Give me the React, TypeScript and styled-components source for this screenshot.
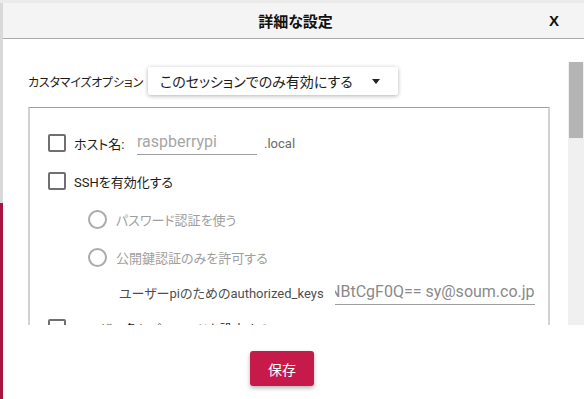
import styled, { createGlobalStyle } from "styled-components";

const GlobalStyle = createGlobalStyle`
  body {
    margin: 0;
    font-family: Roboto, "Noto Sans CJK JP", sans-serif;
    font-feature-settings: "palt";
  }
`;

const Page = styled.div`
  box-sizing: border-box;
  height: 399px;
  width: 584px;
  padding: 3px 0 0 3px;
  display: flex;
  overflow: hidden;
  background:
    linear-gradient(#ebebeb, #ebebeb) top / 100% 3px no-repeat,
    linear-gradient(to bottom, #d9d9d9 203px, #a8163f 203px);
`;

const Dialog = styled.div`
  flex: 1;
  display: flex;
  flex-direction: column;
  background: #fff;
  min-width: 0;
`;

const Header = styled.div`
  height: 35px;
  flex-shrink: 0;
  background: #f4f4f4;
  border-bottom: 1px solid #ababab;
  display: grid;
  grid-template-columns: 1fr auto 1fr;
  align-items: center;
  color: #111;
`;

const Title = styled.div`
  grid-column: 2;
  font-size: 15px;
  font-weight: bold;
  padding-left: 4px;
`;

const Close = styled.div`
  justify-self: end;
  padding-right: 25px;
  font-size: 15px;
  font-weight: bold;
  font-family: "Liberation Sans", Arial, sans-serif;
`;

const Body = styled.div`
  padding-top: 23px;
  flex-shrink: 0;
`;

const ScrollArea = styled.div`
  height: 263px;
  display: flex;
`;

const Content = styled.div`
  flex: 1;
  overflow: hidden;
  padding: 5px 0 0 25px;
`;

const Track = styled.div`
  width: 16px;
  background: #f0f0f0;
  display: flex;
  justify-content: center;
`;

const Thumb = styled.div`
  width: 14px;
  height: 76px;
  background: #b4b4b4;
`;

const OptionRow = styled.div`
  display: flex;
  align-items: center;
  height: 28px;
  gap: 8px;
`;

const OptionLabel = styled.span`
  width: 112px;
  font-size: 12px;
  letter-spacing: -0.2px;
  white-space: nowrap;
  color: #1c1c1c;
`;

const Select = styled.div`
  width: 250px;
  height: 28px;
  box-sizing: border-box;
  display: flex;
  align-items: center;
  justify-content: space-between;
  padding: 0 18px 0 12px;
  background: #fff;
  border-radius: 2px;
  box-shadow: 0 1px 4px rgba(0, 0, 0, 0.3);
  font-size: 14px;
  color: #1c1c1c;
`;

const Group = styled.div`
  margin-top: 12px;
  width: 522px;
  box-sizing: border-box;
  border: 2px solid #d2d2d2;
  border-top: 1px solid #9e9e9e;
  border-bottom: none;
  padding: 16px 0 0 18px;
`;

const Row = styled.div<{ $indent?: number; $height?: number }>`
  display: flex;
  align-items: center;
  height: ${({ $height }) => $height ?? 38}px;
  padding-left: ${({ $indent }) => $indent ?? 0}px;
`;

const CheckBox = styled.span`
  width: 18px;
  height: 18px;
  box-sizing: border-box;
  border: 2px solid #6f6f6f;
  border-radius: 2px;
  flex-shrink: 0;
  margin-right: 8px;
`;

const Radio = styled.span`
  width: 19px;
  height: 19px;
  box-sizing: border-box;
  border: 2px solid #ababab;
  border-radius: 50%;
  flex-shrink: 0;
  margin-right: 9px;
`;

const Label = styled.span<{ $tone?: "dim" | "mid"; $width?: number }>`
  font-size: 13px;
  white-space: nowrap;
  flex-shrink: 0;
  ${({ $width }) => ($width ? `width: ${$width}px;` : "")}
  color: ${({ $tone }) => ($tone === "dim" ? "#9e9e9e" : $tone === "mid" ? "#4f4f4f" : "#1c1c1c")};
`;

const Field = styled.div<{ $width: number; $gap: number }>`
  width: ${({ $width }) => $width}px;
  margin-left: ${({ $gap }) => $gap}px;
  height: 24px;
  box-sizing: border-box;
  border-bottom: 1px solid #9e9e9e;
  display: flex;
  align-items: center;
  justify-content: flex-end;
  overflow: hidden;
  padding-bottom: 2px;
  font-size: 16px;
  white-space: nowrap;
`;

const Placeholder = styled.span`
  margin-right: auto;
  color: #a6a6a6;
`;

const KeyText = styled.span`
  color: #8a8a8a;
`;

const Suffix = styled.span`
  margin-left: 7px;
  font-size: 13px;
  color: #6a6a6a;
`;

const Footer = styled.div`
  flex: 1;
  display: flex;
  justify-content: center;
  padding: 26px 23px 0 0;
`;

const SaveButton = styled.button`
  width: 64px;
  height: 35px;
  border: none;
  border-radius: 3px;
  background: #c51a4a;
  color: #fff;
  font-family: Roboto, "Noto Sans CJK JP", sans-serif;
  font-size: 14px;
  box-shadow: 0 2px 4px rgba(0, 0, 0, 0.3);
`;

const App = () => {
  return (
    <>
      <GlobalStyle />
      <Page>
        <Dialog>
          <Header>
            <Title>詳細な設定</Title>
            <Close>X</Close>
          </Header>
          <Body>
            <ScrollArea>
              <Content>
                <OptionRow>
                  <OptionLabel>カスタマイズオプション</OptionLabel>
                  <Select>
                    <span>このセッションでのみ有効にする</span>
                    <svg width="8" height="5" viewBox="0 0 8 5">
                      <path d="M0 0 L8 0 L4 5 Z" fill="#222" />
                    </svg>
                  </Select>
                </OptionRow>
                <Group>
                  <Row>
                    <CheckBox />
                    <Label $width={63}>ホスト名:</Label>
                    <Field $width={120} $gap={0}>
                      <Placeholder>raspberrypi</Placeholder>
                    </Field>
                    <Suffix>.local</Suffix>
                  </Row>
                  <Row>
                    <CheckBox />
                    <Label>SSHを有効化する</Label>
                  </Row>
                  <Row $indent={40}>
                    <Radio />
                    <Label $tone="dim">パスワード認証を使う</Label>
                  </Row>
                  <Row $indent={40}>
                    <Radio />
                    <Label $tone="dim">公開鍵認証のみを許可する</Label>
                  </Row>
                  <Row $indent={71} $height={33}>
                    <Label $tone="mid">ユーザーpiのためのauthorized_keys</Label>
                    <Field $width={200} $gap={11}>
                      <KeyText>NBtCgF0Q== sy@soum.co.jp</KeyText>
                    </Field>
                  </Row>
                  <Row>
                    <CheckBox />
                    <Label>ユーザー名とパスワードを設定する</Label>
                  </Row>
                </Group>
              </Content>
              <Track>
                <Thumb />
              </Track>
            </ScrollArea>
          </Body>
          <Footer>
            <SaveButton>保存</SaveButton>
          </Footer>
        </Dialog>
      </Page>
    </>
  );
};

export default App;
